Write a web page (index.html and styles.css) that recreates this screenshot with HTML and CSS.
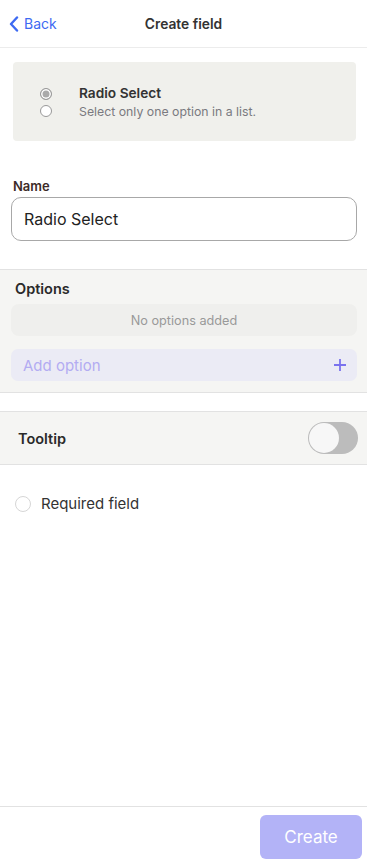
FILE: index.html
```html
<!DOCTYPE html>
<html lang="en">
<head>
  <meta charset="UTF-8">
  <title>Create field</title>
  <link rel="stylesheet" href="styles.css">
</head>
<body>

  <header class="topbar">
    <a class="back" href="#">
      <svg width="10" height="16" viewBox="0 0 10 16"><path d="M8 1.5L2 8l6 6.5" fill="none" stroke="#3d6af2" stroke-width="2.4" stroke-linecap="round" stroke-linejoin="round"/></svg>
      <span>Back</span>
    </a>
    <div class="title">Create field</div>
  </header>

  <div class="page">
    <div class="type-card">
      <div class="type-icon">
        <span class="dot on"></span>
        <span class="dot"></span>
      </div>
      <div class="type-text">
        <div class="type-name">Radio Select</div>
        <div class="type-desc">Select only one option in a list.</div>
      </div>
    </div>

    <div class="name-field">
      <label for="name">Name</label>
      <input type="text" id="name" value="Radio Select">
    </div>

    <section class="options">
      <div class="section-title">Options</div>
      <div class="empty">No options added</div>
      <button class="add-option">
        <span>Add option</span>
        <svg width="14" height="14" viewBox="0 0 14 14"><path d="M7 1v12M1 7h12" stroke="#7a72ee" stroke-width="1.8"/></svg>
      </button>
    </section>

    <section class="tooltip">
      <div class="section-title">Tooltip</div>
      <div class="toggle"><span class="knob"></span></div>
    </section>

    <div class="required">
      <span class="circle"></span>
      <span>Required field</span>
    </div>
  </div>

  <footer class="bottombar">
    <button class="create">Create</button>
  </footer>

</body>
</html>
```

FILE: styles.css
```css
html, body {
  height: 100%;
}

body {
  margin: 0;
  font-family: Inter, 'Noto Sans', sans-serif;
  background: white;
  color: #333;
  display: flex;
  flex-direction: column;
}

.topbar {
  height: 47px;
  border-bottom: 1px solid #ececec;
  display: flex;
  align-items: center;
  position: relative;
  flex-shrink: 0;
}

.back {
  display: flex;
  align-items: center;
  gap: 5px;
  padding-left: 9px;
  color: #3d6af2;
  text-decoration: none;
  font-size: 14px;
  z-index: 1;
}

.title {
  position: absolute;
  left: 0;
  right: 0;
  text-align: center;
  font-size: 13.8px;
  font-weight: 600;
  color: #333;
}

.page {
  flex: 1;
}

.type-card {
  margin: 14px 11px 0 13px;
  height: 79px;
  background: #f0f0ec;
  border-radius: 4px;
  display: flex;
  align-items: center;
}

.type-icon {
  width: 66px;
  display: flex;
  flex-direction: column;
  align-items: center;
  gap: 5px;
  padding-top: 1px;
}

.dot {
  width: 12px;
  height: 12px;
  border: 1px solid #999;
  border-radius: 50%;
  box-sizing: border-box;
  background: white;
}

.dot.on {
  background: #aaa;
  box-shadow: inset 0 0 0 1.5px white;
}

.type-name {
  font-size: 13.7px;
  font-weight: 600;
  color: #333;
  margin-bottom: 3px;
}

.type-desc {
  font-size: 12.3px;
  color: #7a7a80;
}

.name-field {
  padding: 37px 10px 28px 11px;
}

.name-field label {
  display: block;
  font-size: 13px;
  font-weight: 600;
  color: #3d2a28;
  margin: 0 0 3px 2px;
}

.name-field input {
  width: 100%;
  box-sizing: border-box;
  height: 44px;
  border: 1px solid #a8a8a8;
  border-radius: 10px;
  padding: 0 12px;
  font-family: inherit;
  font-size: 16px;
  color: #222;
  outline: none;
}

.options {
  background: #f5f5f3;
  border-top: 1px solid #e2e2e2;
  border-bottom: 1px solid #e2e2e2;
  padding: 10px 10px 11px 11px;
}

.section-title {
  font-size: 14.5px;
  font-weight: 600;
  color: #2a2a2a;
}

.options .section-title {
  padding-left: 4px;
  margin-bottom: 7px;
}

.empty {
  height: 32px;
  background: #efefed;
  border-radius: 8px;
  display: flex;
  align-items: center;
  justify-content: center;
  font-size: 12.7px;
  color: #999;
}

.add-option {
  margin-top: 13px;
  width: 100%;
  height: 32px;
  border: none;
  border-radius: 7px;
  background: #ebebf5;
  display: flex;
  align-items: center;
  justify-content: space-between;
  padding: 0 10px 0 12px;
  font-family: inherit;
  font-size: 15px;
  color: #b3acf2;
  cursor: pointer;
}

.tooltip {
  margin-top: 18px;
  height: 52px;
  background: #f5f5f3;
  border-top: 1px solid #e2e2e2;
  border-bottom: 1px solid #e2e2e2;
  display: flex;
  align-items: center;
  justify-content: space-between;
  padding: 0 9px 0 18px;
}

.toggle {
  width: 50px;
  height: 32px;
  border-radius: 16px;
  background: #bcbcbc;
  position: relative;
}

.knob {
  position: absolute;
  left: 1px;
  top: 1px;
  width: 30px;
  height: 30px;
  border-radius: 50%;
  background: #f7f7f7;
}

.required {
  display: flex;
  align-items: center;
  gap: 10px;
  padding: 29px 0 0 15px;
  font-size: 15px;
  color: #333;
}

.circle {
  width: 16px;
  height: 16px;
  border: 1px solid #d6d6d6;
  border-radius: 50%;
  box-sizing: border-box;
}

.bottombar {
  height: 56px;
  border-top: 1px solid #e2e2e2;
  display: flex;
  justify-content: flex-end;
  align-items: center;
  padding-right: 5px;
  flex-shrink: 0;
}

.create {
  width: 102px;
  height: 44px;
  margin-top: 4px;
  border: none;
  border-radius: 6px;
  background: #b3b3f7;
  color: white;
  font-family: inherit;
  font-size: 17px;
  cursor: pointer;
}
```
